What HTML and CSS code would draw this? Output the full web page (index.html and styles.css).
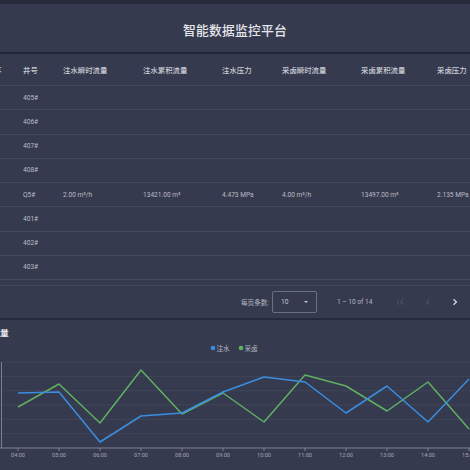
FILE: index.html
```html
<!DOCTYPE html>
<html lang="zh">
<head>
<meta charset="utf-8">
<title>智能数据监控平台</title>
<link rel="stylesheet" href="styles.css">
</head>
<body>
<div class="page">
  <header class="header"><h1 class="title">智能数据监控平台</h1></header>
  <section class="card table-card">
    <table class="grid">
      <colgroup>
        <col class="c0"><col class="c1"><col class="c2"><col class="c3"><col class="c4"><col class="c5"><col class="c6"><col class="c7">
      </colgroup>
      <thead>
        <tr><th class="cut">序</th><th>井号</th><th>注水瞬时流量</th><th>注水累积流量</th><th>注水压力</th><th>采卤瞬时流量</th><th>采卤累积流量</th><th>采卤压力</th></tr>
      </thead>
      <tbody>
        <tr><td></td><td>405#</td><td></td><td></td><td></td><td></td><td></td><td></td></tr>
        <tr><td></td><td>406#</td><td></td><td></td><td></td><td></td><td></td><td></td></tr>
        <tr><td></td><td>407#</td><td></td><td></td><td></td><td></td><td></td><td></td></tr>
        <tr><td></td><td>408#</td><td></td><td></td><td></td><td></td><td></td><td></td></tr>
        <tr><td></td><td>Q5#</td><td>2.00 m³/h</td><td>13421.00 m³</td><td>4.473 MPa</td><td>4.00 m³/h</td><td>13497.00 m³</td><td>2.135 MPa</td></tr>
        <tr><td></td><td>401#</td><td></td><td></td><td></td><td></td><td></td><td></td></tr>
        <tr><td></td><td>402#</td><td></td><td></td><td></td><td></td><td></td><td></td></tr>
        <tr><td></td><td>403#</td><td></td><td></td><td></td><td></td><td></td><td></td></tr>
      </tbody>
    </table>
    <div class="spacer"></div>
    <div class="pager">
      <span class="pager-label">每页条数:</span>
      <div class="select"><span>10</span><span class="caret"></span></div>
      <span class="range">1 – 10 of 14</span>
      <svg class="pg-icon dim" viewBox="0 0 8 8" width="8" height="8"><path d="M1 1v6M6.5 1.2L3.6 4l2.9 2.8" fill="none" stroke="currentColor" stroke-width="1.1"/></svg>
      <svg class="pg-icon dim" viewBox="0 0 8 8" width="8" height="8"><path d="M5.5 1.2L2.6 4l2.9 2.8" fill="none" stroke="currentColor" stroke-width="1.1"/></svg>
      <svg class="pg-icon" viewBox="0 0 8 8" width="8" height="8"><path d="M2.5 1.2L5.4 4 2.5 6.8" fill="none" stroke="currentColor" stroke-width="1.3"/></svg>
    </div>
  </section>
  <section class="card chart-card">
    <div class="chart-title">流量</div>
    <svg class="chart" viewBox="0 0 470 130" width="470" height="130">
      <g class="legend">
        <circle cx="213" cy="8" r="2.3" fill="#3a8ee0"/>
        <text x="216.5" y="10.5">注水</text>
        <circle cx="241" cy="8" r="2.3" fill="#5fb062"/>
        <text x="244.5" y="10.5">采卤</text>
      </g>
      <g class="gridlines">
        <line x1="1.5" y1="22" x2="470" y2="22"/>
        <line x1="1.5" y1="36.3" x2="470" y2="36.3"/>
        <line x1="1.5" y1="50.7" x2="470" y2="50.7"/>
        <line x1="1.5" y1="65" x2="470" y2="65"/>
        <line x1="1.5" y1="79.3" x2="470" y2="79.3"/>
        <line x1="1.5" y1="93.7" x2="470" y2="93.7"/>
      </g>
      <g class="axis">
        <line x1="1.5" y1="22" x2="1.5" y2="108"/>
        <line x1="0" y1="108" x2="470" y2="108"/>
        <path d="M18 108v3M59 108v3M100 108v3M141 108v3M182 108v3M223 108v3M264 108v3M305 108v3M346 108v3M387 108v3M428 108v3M469 108v3"/>
      </g>
      <g class="labels">
        <text x="18" y="117">04:00</text><text x="59" y="117">05:00</text><text x="100" y="117">06:00</text>
        <text x="141" y="117">07:00</text><text x="182" y="117">08:00</text><text x="223" y="117">09:00</text>
        <text x="264" y="117">10:00</text><text x="305" y="117">11:00</text><text x="346" y="117">12:00</text>
        <text x="387" y="117">13:00</text><text x="428" y="117">14:00</text><text x="469" y="117">15:00</text>
      </g>
      <polyline class="series green" points="18,67 59,44 100,83 141,30 182,74 223,53 264,82 305,35 346,46 387,71 428,42 469,89"/>
      <polyline class="series blue" points="18,53 59,52 100,102 141,76 182,73 223,52 264,37 305,42 346,73 387,46 428,82 469,39"/>
    </svg>
  </section>
</div>
</body>
</html>
```
FILE: styles.css
```css
html, body {
  margin: 0;
  padding: 0;
  background: #262a3a;
  overflow: hidden;
}
body {
  width: 470px;
  height: 470px;
  font-family: Roboto, "Noto Sans CJK SC", sans-serif;
  color: #c4c7d0;
}
.page {
  padding-top: 4px;
  display: flex;
  flex-direction: column;
}
.header {
  height: 48px;
  background: #363a4e;
  border-bottom: 2px solid #22263a;
  display: flex;
  align-items: center;
  justify-content: center;
}
.title {
  margin: 0;
  font-size: 12.8px;
  font-weight: 500;
  letter-spacing: 0.2px;
  color: #e4e6ec;
  transform: translateY(1px);
}
.card {
  background: #363a4e;
}
.table-card {
  display: flex;
  flex-direction: column;
  height: 264px;
  border-bottom: 2px solid #262a3a;
}
.grid {
  border-collapse: collapse;
  table-layout: fixed;
  width: 520px;
}
.c0 { width: 23px; }
.c1 { width: 40px; }
.c2 { width: 80px; }
.c3 { width: 79px; }
.c4 { width: 60px; }
.c5 { width: 79px; }
.c6 { width: 76px; }
.c7 { width: 83px; }
.grid th, .grid td {
  padding: 0;
  text-align: left;
  white-space: nowrap;
  border-bottom: 1px solid #44495d;
}
.grid th {
  height: 31px;
  font-size: 7.4px;
  font-weight: 500;
  color: #c9ccd5;
}
.grid td {
  height: 23.25px;
  font-size: 6.6px;
  color: #b9bcc6;
}
.grid th.cut {
  text-indent: -6px;
}
.spacer {
  height: 5px;
  border-bottom: 1px solid #44495d;
}
.pager {
  flex: 1;
  display: flex;
  align-items: center;
  padding-left: 241px;
  font-size: 6.6px;
  color: #b4b8c2;
}
.pager-label {
  margin-right: 3px;
}
.select {
  width: 45px;
  height: 22px;
  box-sizing: border-box;
  border: 1px solid #6a6f82;
  border-radius: 2px;
  display: flex;
  align-items: center;
  padding-left: 8px;
  padding-right: 8px;
  justify-content: space-between;
  color: #c6c9d2;
}
.caret {
  width: 0;
  height: 0;
  border-left: 2.5px solid transparent;
  border-right: 2.5px solid transparent;
  border-top: 2.5px solid #c6c9d2;
}
.range {
  margin-left: 20px;
  color: #b4b8c2;
}
.pg-icon {
  margin-left: 19px;
  color: #d6d9e0;
}
.pg-icon.dim {
  color: #4b5064;
}
.pg-icon:first-of-type {
  margin-left: 25px;
}
.chart-card {
  height: 150px;
  display: flex;
  flex-direction: column;
}
.chart-title {
  margin-left: -8px;
  padding-top: 7px;
  height: 13px;
  line-height: 13px;
  font-size: 8.4px;
  font-weight: 700;
  color: #eceef2;
}
.chart {
  display: block;
}
.legend text {
  font-size: 6.6px;
  fill: #b4b8c2;
}
.gridlines line {
  stroke: #42475a;
  stroke-width: 0.8;
}
.axis line, .axis path {
  stroke: #7b8092;
  stroke-width: 1;
  fill: none;
}
.labels text {
  font-size: 5.6px;
  fill: #a3a7b3;
  text-anchor: middle;
}
.series {
  fill: none;
  stroke-width: 1.5;
  stroke-linejoin: round;
}
.series.blue { stroke: #3a8ee0; }
.series.green { stroke: #5fb062; }
```
